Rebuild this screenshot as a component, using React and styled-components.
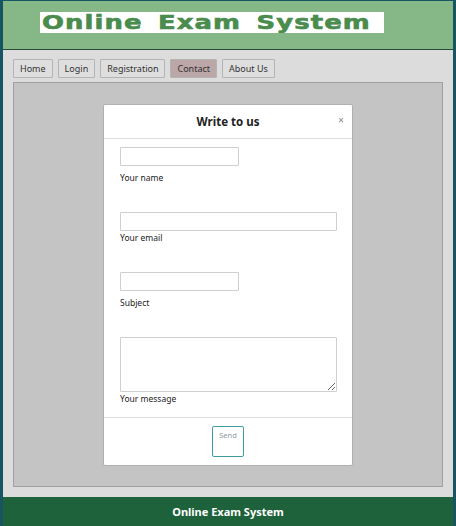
import styled, {createGlobalStyle} from "styled-components";

const GlobalStyle = createGlobalStyle`
    body {
        margin: 0;
        background: #175565;
        font-family: "Noto Sans", "Open Sans", sans-serif;
    }
`;

const Page = styled.div`
    width: 450px;
    margin: 0 3px;
    padding-top: 1px;
    display: flex;
    flex-direction: column;
`;

const Header = styled.header`
    height: 49px;
    background: #85b886;
    border-bottom: 1px solid #2c4a38;
    padding: 11px 0 0 37px;
    box-sizing: border-box;
`;

const Logo = styled.div`
    width: 344px;
    height: 21px;
    background: #fff;
    padding-left: 2px;
    box-sizing: border-box;
    overflow: hidden;
`;

const LogoText = styled.span`
    display: inline-block;
    color: #4a8c4e;
    font-family: "DejaVu Sans", sans-serif;
    font-weight: 900;
    font-size: 19px;
    line-height: 21px;
    letter-spacing: 0.8px;
    word-spacing: 4px;
    white-space: nowrap;
    -webkit-text-stroke: 0.6px #4a8c4e;
    transform: scaleX(1.36);
    transform-origin: left center;
`;

const Main = styled.main`
    background: #dcdcdc;
    padding: 9px 10px 10px;
`;

const Nav = styled.nav`
    display: flex;
    gap: 5px;
    margin-bottom: 4px;
`;

const NavButton = styled.button`
    height: 19px;
    padding: 0 6px;
    border: 1px solid #b4b4b4;
    background: ${p => p.$active ? "#bba6a8" : "#dedede"};
    color: #333;
    font-family: "Noto Sans", sans-serif;
    font-size: 9px;
    line-height: 17px;
    border-radius: 1px;
`;

const Panel = styled.section`
    height: 405px;
    background: #c4c4c4;
    border: 1px solid #a0a0a0;
    box-sizing: border-box;
    padding: 21px 0 0 89px;
`;

const Modal = styled.div`
    width: 250px;
    background: #fff;
    border-radius: 2px;
    border: 1px solid #b0b0b0;
    box-sizing: border-box;
`;

const ModalHeader = styled.div`
    position: relative;
    height: 33px;
    border-bottom: 1px solid #dedede;
    display: flex;
    align-items: center;
    justify-content: center;
`;

const Title = styled.h4`
    margin: 0;
    font-family: "Noto Sans", sans-serif;
    font-size: 11.5px;
    font-weight: 700;
    color: #222;
`;

const Close = styled.span`
    position: absolute;
    right: 8px;
    top: 9px;
    font-size: 10px;
    color: #888;
    line-height: 12px;
`;

const ModalBody = styled.div`
    padding: 8px 16px 12px;
    display: flex;
    flex-direction: column;
    align-items: flex-start;
`;

const Field = styled.div`
    display: flex;
    flex-direction: column;
    align-items: flex-start;
    margin-bottom: ${p => p.$last ? 0 : 28}px;
`;

const Input = styled.input`
    width: ${p => p.$wide ? 217 : 119}px;
    height: 19px;
    box-sizing: border-box;
    border: 1px solid #cfcfcf;
    border-radius: 1px;
    margin: 0;
    padding: 0 4px;
`;

const TextArea = styled.textarea`
    width: 217px;
    height: 55px;
    box-sizing: border-box;
    border: 1px solid #cfcfcf;
    border-radius: 1px;
    margin: 0;
    display: block;
`;

const Label = styled.label`
    display: block;
    margin-top: ${p => p.$mt}px;
    font-family: "Noto Sans", sans-serif;
    font-size: 8.5px;
    line-height: 12px;
    color: #222;
`;

const ModalFooter = styled.div`
    border-top: 1px solid #dedede;
    padding: 8px 0 8px;
    display: flex;
    justify-content: center;
`;

const SendButton = styled.button`
    width: 32px;
    height: 31px;
    box-sizing: border-box;
    border: 1px solid #3c9ca0;
    border-radius: 2px;
    background: #fff;
    color: #8a9ca2;
    font-family: "Noto Sans", sans-serif;
    font-size: 7.5px;
    line-height: 10px;
    padding: 3px 0 0;
    display: flex;
    justify-content: center;
    align-items: flex-start;
`;

const Footer = styled.footer`
    height: 29px;
    background: #1d623b;
    color: #fff;
    font-family: "Noto Sans", sans-serif;
    font-weight: 700;
    font-size: 11px;
    display: flex;
    align-items: center;
    justify-content: center;
`;

const navItems = [
    {label: "Home"},
    {label: "Login"},
    {label: "Registration"},
    {label: "Contact", active: true},
    {label: "About Us"},
];

export default function App() {
    return (
        <>
            <GlobalStyle />
            <Page>
                <Header>
                    <Logo>
                        <LogoText>Online Exam System</LogoText>
                    </Logo>
                </Header>
                <Main>
                    <Nav>
                        {navItems.map(item => (
                            <NavButton key={item.label} $active={item.active}>{item.label}</NavButton>
                        ))}
                    </Nav>
                    <Panel>
                        <Modal>
                            <ModalHeader>
                                <Title>Write to us</Title>
                                <Close>×</Close>
                            </ModalHeader>
                            <ModalBody>
                                <Field>
                                    <Input id='name' />
                                    <Label htmlFor='name' $mt={6}>Your name</Label>
                                </Field>
                                <Field>
                                    <Input id='email' $wide />
                                    <Label htmlFor='email' $mt={1}>Your email</Label>
                                </Field>
                                <Field>
                                    <Input id='subject' />
                                    <Label htmlFor='subject' $mt={6}>Subject</Label>
                                </Field>
                                <Field $last>
                                    <TextArea id='message' />
                                    <Label htmlFor='message' $mt={1}>Your message</Label>
                                </Field>
                            </ModalBody>
                            <ModalFooter>
                                <SendButton>Send</SendButton>
                            </ModalFooter>
                        </Modal>
                    </Panel>
                </Main>
                <Footer>Online Exam System</Footer>
            </Page>
        </>
    );
}
